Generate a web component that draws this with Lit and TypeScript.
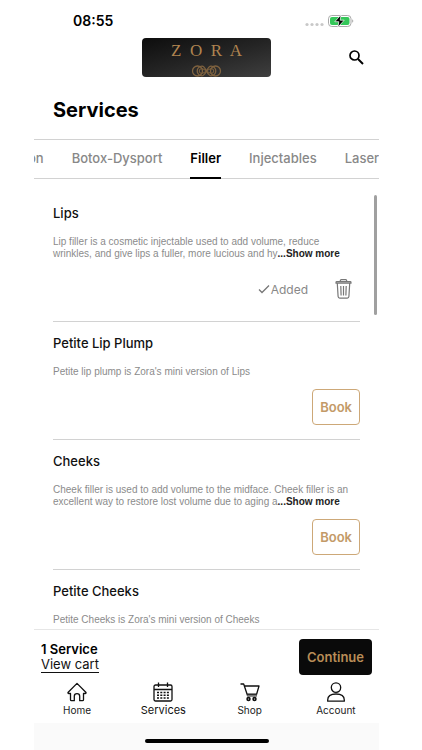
import { LitElement, html, css, svg, nothing } from "lit";
import { customElement, property } from "lit/decorators.js";
import { classMap } from "lit/directives/class-map.js";

interface Service {
  name: string;
  text: string;
  more?: boolean;
  added?: boolean;
}

const services: Service[] = [
  {
    name: "Lips",
    text: "Lip filler is a cosmetic injectable used to add volume, reduce wrinkles, and give lips a fuller, more lucious and hy",
    more: true,
    added: true,
  },
  { name: "Petite Lip Plump", text: "Petite lip plump is Zora's mini version of Lips" },
  {
    name: "Cheeks",
    text: "Cheek filler is used to add volume to the midface. Cheek filler is an excellent way to restore lost volume due to aging a",
    more: true,
  },
  { name: "Petite Cheeks", text: "Petite Cheeks is Zora's mini version of Cheeks" },
];

const icons = {
  home: svg`<path d="M1.2 10.2 10 1.4l8.800 8.800c.6.7.1 1.300-.6 1.300h-1.700v6.200c0 .6-.4 1-1 1h-2.800v-4.500c0-1.600-1-2.500-2.700-2.500s-2.700.9-2.700 2.500v4.500H4.500c-.6 0-1-.4-1-1v-6.200H1.800c-.7 0-1.200-.6-.6-1.300Z"/>`,
  services: svg`<rect x="1" y="3" width="18" height="16" rx="1.500"/><path d="M1 7.500h18M5.500.500v4.500M14.500.500v4.500"/><path d="M4 10.500h2M7.300 10.500h2M10.600 10.500h2M13.900 10.500h2M4 13.300h2M7.300 13.300h2M10.600 13.300h2M13.900 13.300h2M4 16.100h2M7.300 16.100h2M10.600 16.100h2M13.900 16.100h2" stroke-width="1.500"/>`,
  shop: svg`<path d="M.5 2h3.200l3.800 11.500h9.300M4.300 4H19l-2.400 8.200H7.200"/><path d="M7.200 13.700h9.600" stroke="#777" stroke-width="2"/><circle cx="8.500" cy="17" r="1.400" stroke-width="1.700"/><circle cx="14.500" cy="17" r="1.400" stroke-width="1.700"/>`,
  account: svg`<circle cx="10" cy="5.600" r="4.700"/><path d="M1.700 19.200v-1.200c0-4 3.500-6 8.300-6s8.300 2 8.300 6v1.200Z"/>`,
};

@customElement("service-card")
export class ServiceCard extends LitElement {
  @property({ attribute: false }) service!: Service;

  static styles = css`
    :host { display: block; border-bottom: 1px solid #d2d2d2; padding: 12px 0 14px; }
    .name { margin: 0; font-size: 13px; line-height: 18px; font-weight: 500; color: #111; }
    .text { margin: 14px 0 11px; font: 10px/12px "Liberation Sans", sans-serif; color: #8b8b8b; }
    .more { all: unset; font-weight: 700; color: #222; cursor: pointer; }
    .actions { display: flex; justify-content: flex-end; align-items: center; height: 36px; }
    .book {
      height: 36px; padding: 0 7px; border: 1px solid #cda878; border-radius: 4px;
      background: #fff; color: #c39a68; font: 600 13px/18px Inter, sans-serif; cursor: pointer;
    }
    .added { display: flex; align-items: center; gap: 1px; font-size: 12px; color: #888; }
    .remove { all: unset; display: flex; margin: 0 8px 0 27px; cursor: pointer; }
  `;

  render() {
    const s = this.service;
    return html`
      <h2 class="name">${s.name}</h2>
      <p class="text">${s.text}${s.more ? html`<button class="more">...Show more</button>` : nothing}</p>
      <div class="actions">
        ${s.added
          ? html`
              <span class="added">
                <svg width="12" height="10" viewBox="0 0 12 10" fill="none" stroke="#777" stroke-width="1.300"><path d="M1 5.500 4 8.500 11 1.500"/></svg>
                Added
              </span>
              <button class="remove" aria-label="Remove">
                <svg width="17" height="20" viewBox="0 0 17 20" fill="none" stroke="#777" stroke-width="1.200" stroke-linejoin="round">
                  <path d="M1 4.200V3.400c0-.5.300-.8.800-.8h13.400c.5 0 .8.300.8.800v.8ZM5.300 2.500V1.700c0-.6.400-1 1-1h4.400c.6 0 1 .4 1 1v.8M2.300 4.500l.8 13c.1 1 .7 1.600 1.600 1.600h7.600c.9 0 1.500-.6 1.600-1.600l.8-13M5.800 7l.3 9.500M8.500 7v9.500M11.200 7l-.3 9.500"/>
                </svg>
              </button>`
          : html`<button class="book">Book</button>`}
      </div>
    `;
  }
}

@customElement("app-root")
export class AppRoot extends LitElement {
  static styles = css`
    :host { display: block; background: #fff; font-family: Inter, "Liberation Sans", sans-serif; color: #000; }
    .screen { display: flex; flex-direction: column; height: 100vh; margin: 0 43px 0 34px; }
    .status { display: flex; justify-content: space-between; align-items: center; padding: 12px 25px 8px 39px; line-height: 18px; font-size: 14px; font-weight: 600; }
    .power { display: flex; align-items: center; gap: 4px; }
    .header { display: grid; grid-template-columns: 1fr auto 1fr; align-items: center; }
    .logo {
      grid-column: 2; box-sizing: border-box; width: 129px; height: 39px; border-radius: 4px;
      display: flex; flex-direction: column; align-items: center; gap: 5px; padding-top: 3px;
      background: linear-gradient(165deg, #0d0d0d, #242424 50%, #3f3f3f);
      color: #b08450; font: 17px/19px "Liberation Serif", serif; white-space: pre;
    }
    .search { all: unset; justify-self: end; display: flex; margin-right: 15px; cursor: pointer; }
    .title { margin: 0; padding: 20px 19px 16px; font-size: 20px; line-height: 26px; font-weight: 700; }
    .tabs { display: flex; flex: none; gap: 28px; height: 39px; overflow: hidden; border-top: 1px solid #d2d2d2; box-shadow: inset 0 -1px #d2d2d2; }
    .tab { all: unset; flex: none; box-sizing: border-box; height: 39px; border-bottom: 2px solid transparent; font-size: 13px; line-height: 37px; font-weight: 500; color: #888; cursor: pointer; }
    .tab.cut { margin-left: -6px; }
    .tab.on { color: #000; font-weight: 600; border-color: #000; }
    .list { position: relative; flex: 1; min-height: 0; overflow: hidden; padding: 13px 19px 0; }
    .thumb { position: absolute; top: 16px; right: 2px; width: 3px; height: 120px; border-radius: 2px; background: #a0a0a0; }
    .cart { display: flex; justify-content: space-between; align-items: center; border-top: 1px solid #e6e6e6; padding: 9px 7px 5px; }
    .count { font-size: 13px; line-height: 16px; font-weight: 600; }
    .view { display: block; width: fit-content; font-size: 13px; line-height: 15px; color: #111; text-decoration: none; border-bottom: 1px solid #111; }
    .go { height: 36px; padding: 0 8px; border: 0; border-radius: 4px; background: #0a0a0a; color: #b98d57; font: 600 13px/18px Inter, sans-serif; cursor: pointer; }
    .nav { display: grid; grid-template-columns: repeat(4, 1fr); padding: 1px 0 7px; }
    .link { display: flex; flex-direction: column; align-items: center; gap: 1px; color: #222; text-decoration: none; font-size: 10px; line-height: 12px; }
    .link.on { font-size: 11px; color: #111; }
    .foot { display: flex; justify-content: center; background: #fafafa; padding: 16px 0 7px; }
    .bar { width: 124px; height: 4px; border-radius: 2px; background: #000; }
  `;

  private link(label: string, icon: unknown, on = false) {
    return html`<a class=${classMap({ link: true, on })} href="#">
      <svg width="22" height="22" viewBox="-1 -1 22 22" fill="none" stroke="#111" stroke-width="1.300" stroke-linejoin="round">${icon}</svg>
      <span>${label}</span>
    </a>`;
  }

  render() {
    return html`
      <div class="screen">
        <div class="status">
          <span>08:55</span>
          <span class="power">
            <svg width="19" height="12" viewBox="0 0 19 12" fill="#c8c8c8"><circle cx="2" cy="9.500" r="1.600"/><circle cx="7" cy="9.500" r="1.600"/><circle cx="12" cy="9.500" r="1.600"/><circle cx="17" cy="9.500" r="1.600"/></svg>
            <svg width="26" height="14" viewBox="0 0 26 14">
              <rect x=".5" y="1.500" width="22.500" height="11" rx="3.300" fill="#fff" stroke="#aaa"/>
              <rect x="2" y="3" width="19.500" height="8" rx="2" fill="#34c759"/>
              <path d="M24.300 5.200c1.300.6 1.300 3 0 3.600Z" fill="#999"/>
              <path d="M13 .8 6.800 7.700h4L9.900 13.300l6.300-7.100h-4Z" fill="#000" stroke="#fff" stroke-width=".7"/>
            </svg>
          </span>
        </div>
        <header class="header">
          <div class="logo">
            <span>Z  O  R  A</span>
            <svg width="31" height="12" viewBox="0 0 31 12" fill="none" stroke="#80633f" stroke-width="1.300">
              <circle cx="6.500" cy="6" r="5"/><circle cx="24.500" cy="6" r="5"/>
              <path d="M11 1.200c4 0 5 9.600 9 9.600a4.800 4.800 0 0 0 0-9.600c-4 0-5 9.600-9 9.600a4.800 4.800 0 0 1 0-9.600Z"/>
              <path d="M10.500 3.700c2 0 3 1.200 5 2.300s3 2.300 5 2.300a2.300 2.300 0 0 0 0-4.600c-2 0-3 1.200-5 2.300s-3 2.300-5 2.300a2.300 2.300 0 0 1 0-4.600Z" stroke-width="1"/>
            </svg>
          </div>
          <button class="search" aria-label="Search">
            <svg width="15" height="15" viewBox="0 0 15 15" fill="none" stroke="#000"><circle cx="5.500" cy="5.500" r="4.500" stroke-width="1.700"/><path d="m9 9 5 5" stroke-width="2"/></svg>
          </button>
        </header>
        <h1 class="title">Services</h1>
        <div class="tabs">
          <button class="tab cut">on</button>
          <button class="tab">Botox-Dysport</button>
          <button class="tab on">Filler</button>
          <button class="tab">Injectables</button>
          <button class="tab">Laser</button>
        </div>
        <main class="list">
          ${services.map((s) => html`<service-card .service=${s}></service-card>`)}
          <div class="thumb"></div>
        </main>
        <div class="cart">
          <div>
            <div class="count">1 Service</div>
            <a class="view" href="#">View cart</a>
          </div>
          <button class="go">Continue</button>
        </div>
        <nav class="nav">
          ${this.link("Home", icons.home)} ${this.link("Services", icons.services, true)}
          ${this.link("Shop", icons.shop)} ${this.link("Account", icons.account)}
        </nav>
        <div class="foot"><div class="bar"></div></div>
      </div>
    `;
  }
}
